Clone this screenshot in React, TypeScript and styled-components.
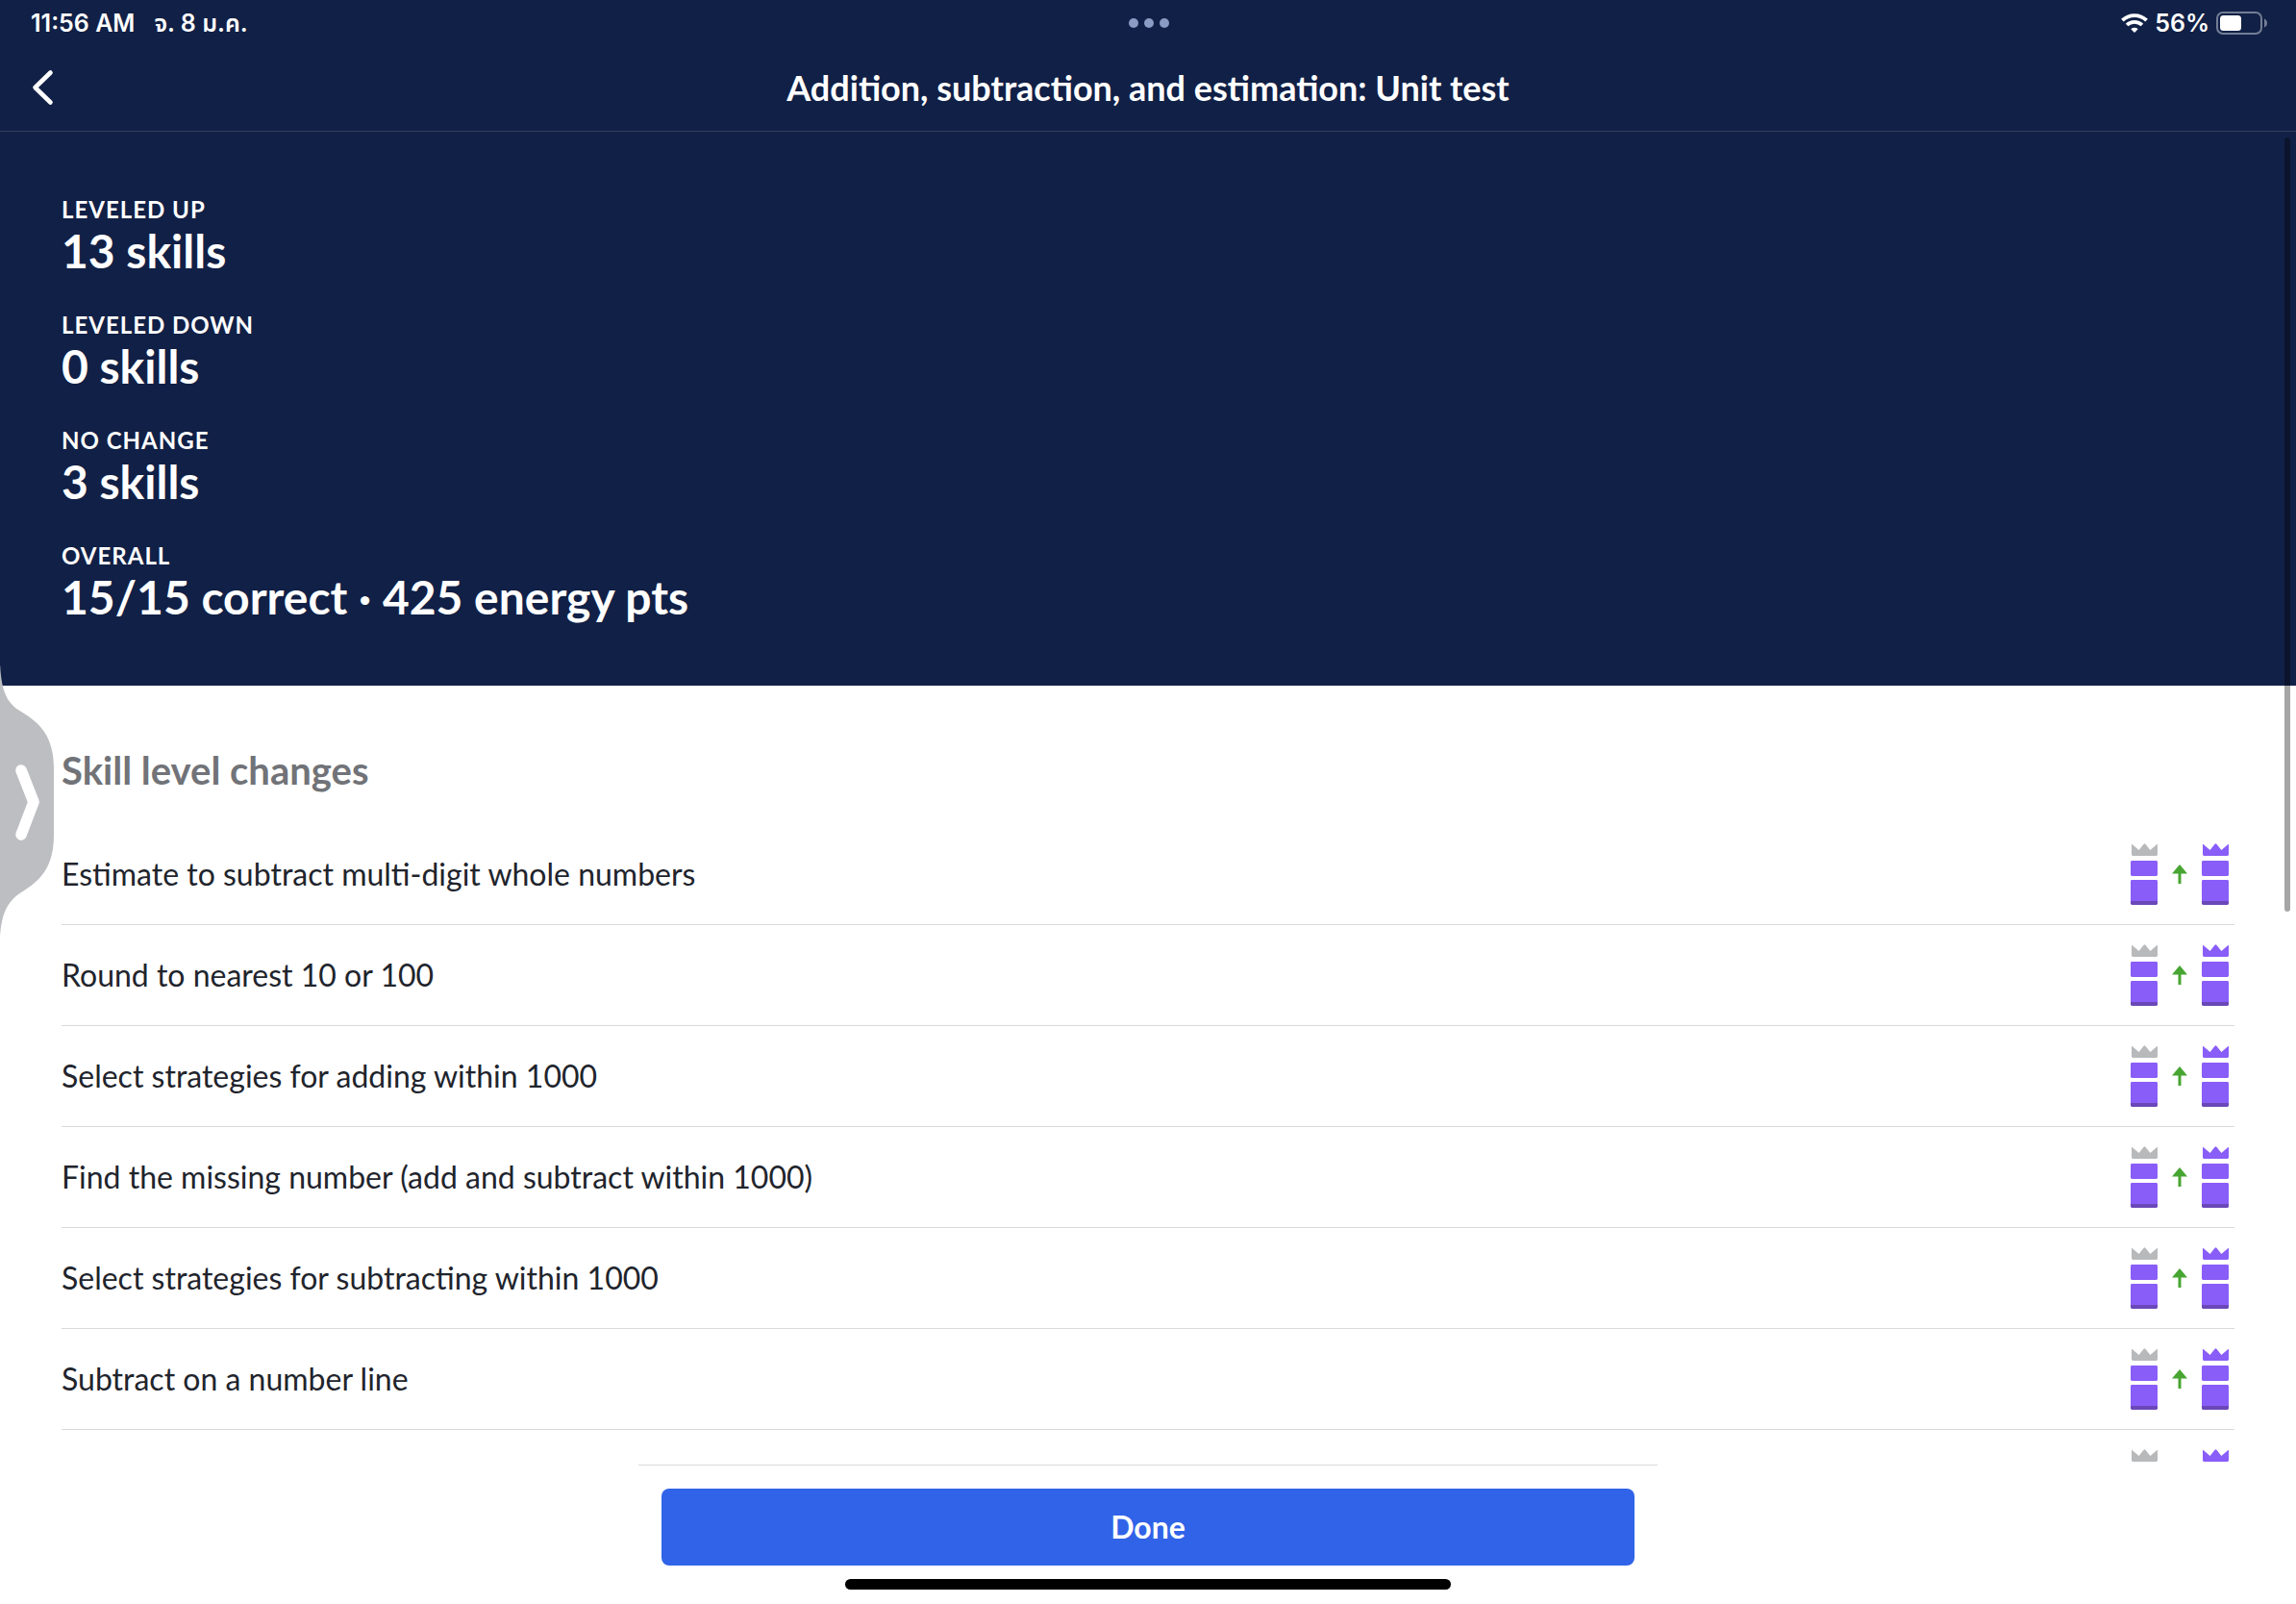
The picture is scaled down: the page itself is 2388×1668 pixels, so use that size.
import React from "react";
import styled, { createGlobalStyle } from "styled-components";

const GlobalStyle = createGlobalStyle`
  *, *::before, *::after { box-sizing: border-box; }
  body { margin: 0; background: #ffffff; }
  h1, h2, p, dl, dt, dd, ul { margin: 0; padding: 0; }
`;

const Screen = styled.div`
  position: relative;
  display: flex;
  flex-direction: column;
  height: 100vh;
  overflow: hidden;
  background: #ffffff;
  color: #21242c;
  font-family: Lato, "Noto Sans", sans-serif;
`;

const Header = styled.header`
  flex: none;
  background: #112046;
  color: #ffffff;
  border-bottom: 1px solid #33415f;
`;

const StatusBar = styled.div`
  display: grid;
  grid-template-columns: 1fr auto 1fr;
  align-items: center;
  height: 48px;
  padding: 0 30px 0 32px;
  font-family: Inter, "Noto Sans Thai", "Noto Sans", sans-serif;
  font-size: 25px;
  font-weight: 600;
  line-height: 32px;
`;

const StatusGroup = styled.div<{ $end?: boolean; $gap: number }>`
  display: flex;
  align-items: center;
  justify-content: ${(p) => (p.$end ? "flex-end" : "flex-start")};
  gap: ${(p) => p.$gap}px;
`;

const MultitaskButton = styled.button`
  display: flex;
  gap: 6px;
  padding: 0;
  border: 0;
  background: none;
`;

const Dot = styled.span`
  width: 10px;
  height: 10px;
  border-radius: 50%;
  background: #8a9bc4;
`;

const NavBar = styled.div`
  display: grid;
  grid-template-columns: 64px 1fr 64px;
  align-items: center;
  height: 88px;
  padding-bottom: 2px;
`;

const BackButton = styled.button`
  display: flex;
  align-items: center;
  height: 64px;
  padding: 0 0 0 32px;
  border: 0;
  background: none;
  color: inherit;
`;

const Title = styled.h1`
  font-size: 36px;
  font-weight: 700;
  line-height: 48px;
  text-align: center;
`;

const Content = styled.main`
  flex: 1;
  min-height: 0;
  overflow: hidden;
`;

const Summary = styled.dl`
  display: flex;
  flex-direction: column;
  gap: 34px;
  padding: 64px 64px 66px;
  background: #112046;
  color: #ffffff;
`;

const StatLabel = styled.dt`
  font-size: 24px;
  font-weight: 700;
  line-height: 34px;
  letter-spacing: 1px;
  text-transform: uppercase;
`;

const StatValue = styled.dd`
  font-size: 48px;
  font-weight: 700;
  line-height: 52px;
`;

const Skills = styled.section`
  padding: 64px;
`;

const SectionTitle = styled.h2`
  margin-bottom: 32px;
  color: #717378;
  font-size: 40px;
  font-weight: 700;
  line-height: 48px;
`;

const SkillList = styled.ul`
  list-style: none;
`;

const SkillRow = styled.li`
  display: flex;
  align-items: center;
  justify-content: space-between;
  padding: 20px 6px 20px 0;
  border-bottom: 1px solid #d9dadc;
`;

const SkillName = styled.span`
  font-size: 32px;
  line-height: 40px;
`;

const LevelChange = styled.span`
  display: flex;
  align-items: center;
  gap: 14px;
`;

const Footer = styled.footer`
  flex: none;
  display: flex;
  flex-direction: column;
  align-items: center;
  gap: 14px;
  padding-bottom: 15px;
`;

const DoneBar = styled.div`
  width: 1060px;
  max-width: 100%;
  padding: 24px 24px 0;
  border-top: 1px solid #d9dadc;
`;

const DoneButton = styled.button`
  display: block;
  width: 100%;
  height: 80px;
  border: 0;
  border-radius: 8px;
  background: #3063e8;
  color: #ffffff;
  font-family: inherit;
  font-size: 32px;
  font-weight: 700;
  line-height: 40px;
`;

const HomeIndicator = styled.div`
  width: 630px;
  max-width: 60%;
  height: 11px;
  border-radius: 6px;
  background: #000000;
`;

const ScrollThumb = styled.div`
  position: absolute;
  top: 143px;
  right: 6px;
  width: 6px;
  height: 805px;
  border-radius: 3px;
  background: rgba(0, 0, 0, 0.35);
`;

const DrawerHandle = styled.button`
  position: absolute;
  top: 692px;
  left: 0;
  display: flex;
  padding: 0;
  border: 0;
  background: none;
`;

const Tower = ({ crown }: { crown: string }) => (
  <svg width="28" height="64" viewBox="0 0 28 64" aria-hidden="true">
    <path d="M1 1.4Q1 .4 1.9 1.2L8.6 7 13.4 1Q14.5-.4 15.6 1L20.4 7 27.1 1.2Q28 .4 28 1.4V11.6Q28 13 26.6 13H2.4Q1 13 1 11.6Z" fill={crown} />
    <rect y="18" width="28" height="16" rx="1.4" fill="#895df8" />
    <path d="M0 39.4Q0 38 1.4 38H26.6Q28 38 28 39.4V60H0Z" fill="#895df8" />
    <path d="M0 60H28V62.6Q28 64 26.6 64H1.4Q0 64 0 62.6Z" fill="#6a48b8" />
  </svg>
);

const UpArrow = () => (
  <svg width="18" height="20" viewBox="-1 0 18 20" aria-hidden="true">
    <path d="M8 0 16 9.4H9.5V20H6.5V9.4H0Z" fill="#47a531" />
  </svg>
);

const stats = [
  { label: "Leveled up", value: "13 skills" },
  { label: "Leveled down", value: "0 skills" },
  { label: "No change", value: "3 skills" },
  { label: "Overall", value: "15/15 correct · 425 energy pts" },
];

const skills = [
  "Estimate to subtract multi-digit whole numbers",
  "Round to nearest 10 or 100",
  "Select strategies for adding within 1000",
  "Find the missing number (add and subtract within 1000)",
  "Select strategies for subtracting within 1000",
  "Subtract on a number line",
  "",
];

export default function App() {
  return (
    <Screen>
      <GlobalStyle />
      <Header>
        <StatusBar>
          <StatusGroup $gap={20}>
            <span>11:56 AM</span>
            <span lang="th">จ. 8 ม.ค.</span>
          </StatusGroup>
          <MultitaskButton aria-label="Multitasking">
            <Dot />
            <Dot />
            <Dot />
          </MultitaskButton>
          <StatusGroup $end $gap={7}>
            <svg width="28" height="20" viewBox="0 0 28 20" aria-hidden="true">
              <g fill="none" stroke="#ffffff" strokeWidth="3.8">
                <path d="M1.4 7.2A18 18 0 0 1 26.6 7.2" />
                <path d="M6.1 12A11.4 11.4 0 0 1 21.9 12" />
              </g>
              <path d="M10.3 16.2A5.4 5.4 0 0 1 17.7 16.2L14 20Z" fill="#ffffff" />
            </svg>
            <span>56%</span>
            <svg width="53" height="24" viewBox="0 0 53 24" aria-hidden="true">
              <rect x="1" y="1" width="46" height="22" rx="6" fill="none" stroke="#737d95" strokeWidth="2" />
              <rect x="4" y="4" width="22" height="16" rx="3.5" fill="#ffffff" />
              <path d="M50 7.5Q53 9 53 12T50 16.5Z" fill="#737d95" />
            </svg>
          </StatusGroup>
        </StatusBar>
        <NavBar>
          <BackButton aria-label="Back">
            <svg width="24" height="38" viewBox="0 0 24 38" aria-hidden="true">
              <path d="M20.5 3.5 4.5 19 20.5 34.5" fill="none" stroke="#ffffff" strokeWidth="4.6" strokeLinecap="round" strokeLinejoin="round" />
            </svg>
          </BackButton>
          <Title>Addition, subtraction, and estimation: Unit test</Title>
        </NavBar>
      </Header>

      <Content>
        <Summary>
          {stats.map((stat) => (
            <div key={stat.label}>
              <StatLabel>{stat.label}</StatLabel>
              <StatValue>{stat.value}</StatValue>
            </div>
          ))}
        </Summary>
        <Skills>
          <SectionTitle>Skill level changes</SectionTitle>
          <SkillList>
            {skills.map((name, i) => (
              <SkillRow key={i}>
                <SkillName>{name}</SkillName>
                <LevelChange>
                  <Tower crown="#b8b9bb" />
                  <UpArrow />
                  <Tower crown="#895df8" />
                </LevelChange>
              </SkillRow>
            ))}
          </SkillList>
        </Skills>
      </Content>

      <Footer>
        <DoneBar>
          <DoneButton>Done</DoneButton>
        </DoneBar>
        <HomeIndicator />
      </Footer>

      <ScrollThumb />
      <DrawerHandle aria-label="Open drawer">
        <svg width="56" height="284" viewBox="0 0 56 284" aria-hidden="true">
          <path d="M0-4C1 28 8 40 22 48C42 60 56 74 56 108V176C56 210 42 224 22 236C6 246 1 262 0 284Z" fill="#bdbec2" />
          <path d="M22 109 35 142 22 176" fill="none" stroke="#ffffff" strokeWidth="11.6" strokeLinecap="round" strokeLinejoin="round" />
        </svg>
      </DrawerHandle>
    </Screen>
  );
}
